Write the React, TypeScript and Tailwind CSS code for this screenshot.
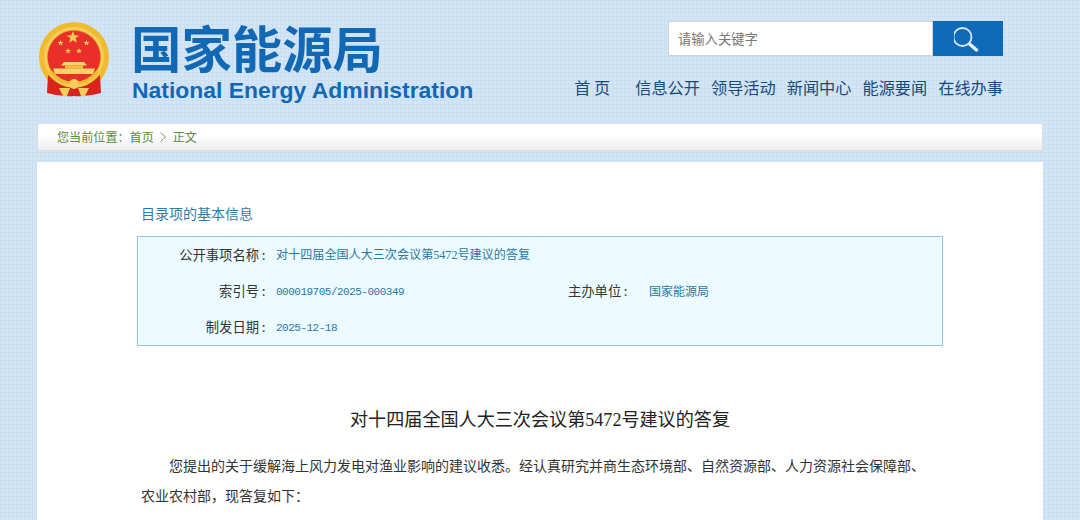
const cjk = "font-['Noto_Sans_CJK_SC','Liberation_Sans',sans-serif]"
const mono = "font-['Liberation_Mono',monospace] text-[11px] tracking-[-0.5px]"

const navItems = ['信息公开', '领导活动', '新闻中心', '能源要闻', '在线办事']

function Star({ x, y, r }: { x: number; y: number; r: number }) {
  const pts = Array.from({ length: 10 }, (_, i) => {
    const rad = i % 2 === 0 ? r : r * 0.42
    const a = (Math.PI / 5) * i - Math.PI / 2
    return `${(x + rad * Math.cos(a)).toFixed(2)},${(y + rad * Math.sin(a)).toFixed(2)}`
  }).join(' ')
  return <polygon points={pts} fill="#f3c94f" />
}

function Emblem() {
  return (
    <svg width="72" height="76" viewBox="39 22 72 76" className="shrink-0">
      {/* ring */}
      <circle cx="74" cy="57" r="35" fill="#f0bb2e" />
      <circle cx="74" cy="57" r="30" fill="#f5cd58" />
      <circle cx="74" cy="57" r="27" fill="#dd961c" />
      <circle cx="74" cy="57" r="26.3" fill="#ea2f2a" />
      <Star x={73} y={37.5} r={6.5} />
      <Star x={60.5} y={43} r={3.2} />
      <Star x={86.5} y={43} r={3.2} />
      <Star x={68} y={51} r={3.2} />
      <Star x={79} y={51} r={3.2} />
      {/* gate */}
      <path d="M64 62 L84 62 L87 65.5 L61 65.5 Z" fill="#f8d568" />
      <rect x="65" y="65.5" width="18" height="3" fill="#f3c143" />
      <path d="M53 68.5 H95 L93 74 H55 Z" fill="#f8d568" />
      {/* ribbons */}
      <path d="M48 75 Q60 88 74 88 Q88 88 100 75 L101 93 Q88 97 74 96 Q60 97 47 93 Z" fill="#d9231f" />
      {/* wreath bottom */}
      <path d="M50 71 Q60 84 74 83 Q88 84 98 71" fill="none" stroke="#f0bb2e" strokeWidth="3.5" />
      <circle cx="74" cy="84" r="5" fill="#f5cd58" />
      <path d="M59 88 H70 L67 96 H63 Z M78 88 H89 L85 96 H81 Z" fill="#f5cd58" />
    </svg>
  )
}

function Label({ text, className }: { text: string; className: string }) {
  return (
    <span className={`flex text-[13.3px] text-[#333] ${className}`}>
      {text}
      <span className="w-[9px] text-center">:</span>
    </span>
  )
}

function Row({ label, children }: { label: string; children: React.ReactNode }) {
  return (
    <>
      <Label text={label} className="w-[130px] justify-end" />
      <span className="ml-2 w-[292px] text-[12.1px] text-[#2a78a3]">{children}</span>
    </>
  )
}

export default function App() {
  return (
    <div
      className={`${cjk} h-[520px] w-[1080px] overflow-hidden bg-[#d4e5f6] bg-[linear-gradient(#cbdff3_1px,transparent_1px),linear-gradient(90deg,#cbdff3_1px,transparent_1px)] bg-[size:4px_4px] px-[37px]`}
    >
      {/* header */}
      <header className="flex h-[123px] justify-between pl-[2px] pr-[40px]">
        <div className="flex pt-[22px]">
          <Emblem />
          <div className="ml-[20px] flex flex-col">
            <div className="mt-[-3px] h-[55px] text-[50.4px] font-bold leading-[55px] text-[#1169b5]">
              国家能源局
            </div>
            <div className="ml-px mt-px font-['Liberation_Sans',sans-serif] text-[22.9px] font-bold leading-[30px] text-[#1169b5]">
              National Energy Administration
            </div>
          </div>
        </div>
        <div className="flex flex-col items-end pt-[21px]">
          <div className="flex h-[35px]">
            <div className="flex w-[265px] items-center border border-[#d3d3d3] bg-white pl-[9px] text-[13.3px] text-[#777]">
              请输入关键字
            </div>
            <div className="flex w-[70px] items-center justify-center bg-[#0f6ab8]">
              <svg width="28" height="26" viewBox="0 0 28 26" fill="none">
                <circle cx="8.5" cy="11" r="9" stroke="#d7e9f7" strokeWidth="1.8" />
                <path d="M15.5 18 L22.5 24" stroke="#e8f2fa" strokeWidth="3.4" strokeLinecap="round" />
              </svg>
            </div>
          </div>
          <nav className="mt-[19px] flex h-[24px] items-center text-[16.2px] leading-[24px] text-[#1a4a7a]">
            <span className="mr-[25px] w-[36px] whitespace-nowrap">首&nbsp;页</span>
            <div className="flex gap-[11px]">
              {navItems.map((item) => (
                <span key={item}>{item}</span>
              ))}
            </div>
          </nav>
        </div>
      </header>

      {/* breadcrumb */}
      <div className="flex h-[28px] items-center border border-[#dcdfe2] bg-gradient-to-b from-white from-40% to-[#eceef0] pl-[19px] text-[12.1px] text-[#5d8a3c]">
        您当前位置：首页
        <svg width="8" height="10" viewBox="0 0 8 10" fill="none" className="ml-[5px] mr-[6px]">
          <path d="M1.5 0.5 L6.5 5 L1.5 9.5" stroke="#7d9a68" strokeWidth="1" />
        </svg>
        正文
      </div>

      {/* main card */}
      <main className="mt-[11px] h-[400px] bg-white pl-[104px] pt-[41px]">
        <h2 className="text-sm leading-5 text-[#2f7ba8]">目录项的基本信息</h2>
        <div className="ml-[-4px] mt-[13px] w-[806px] border border-[#93c4e6] bg-[#ebfbff]">
          <div className="flex h-9 items-center">
            <Row label="公开事项名称">
              <span className="whitespace-nowrap">
                对十四届全国人大三次会议第<span className="font-['Liberation_Serif',serif]">5472</span>号建议的答复
              </span>
            </Row>
          </div>
          <div className="flex h-9 items-center">
            <Row label="索引号">
              <span className={mono}>000019705/2025-000349</span>
            </Row>
            <Label text="主办单位" className="w-[65px]" />
            <span className="ml-4 text-xs text-[#2a78a3]">国家能源局</span>
          </div>
          <div className="flex h-9 items-center">
            <Row label="制发日期">
              <span className={mono}>2025-12-18</span>
            </Row>
          </div>
        </div>
        <h1 className="ml-[-104px] mt-[58px] w-[1006px] text-center text-[18.1px] leading-7 text-[#222]">
          对十四届全国人大三次会议第<span className="font-['Liberation_Serif',serif]">5472</span>号建议的答复
        </h1>
        <p className="mt-[16px] w-[790px] indent-7 text-sm leading-[30px] text-[#333]">
          您提出的关于缓解海上风力发电对渔业影响的建议收悉。经认真研究并商生态环境部、自然资源部、人力资源社会保障部、农业农村部，现答复如下：
        </p>
      </main>
    </div>
  )
}
